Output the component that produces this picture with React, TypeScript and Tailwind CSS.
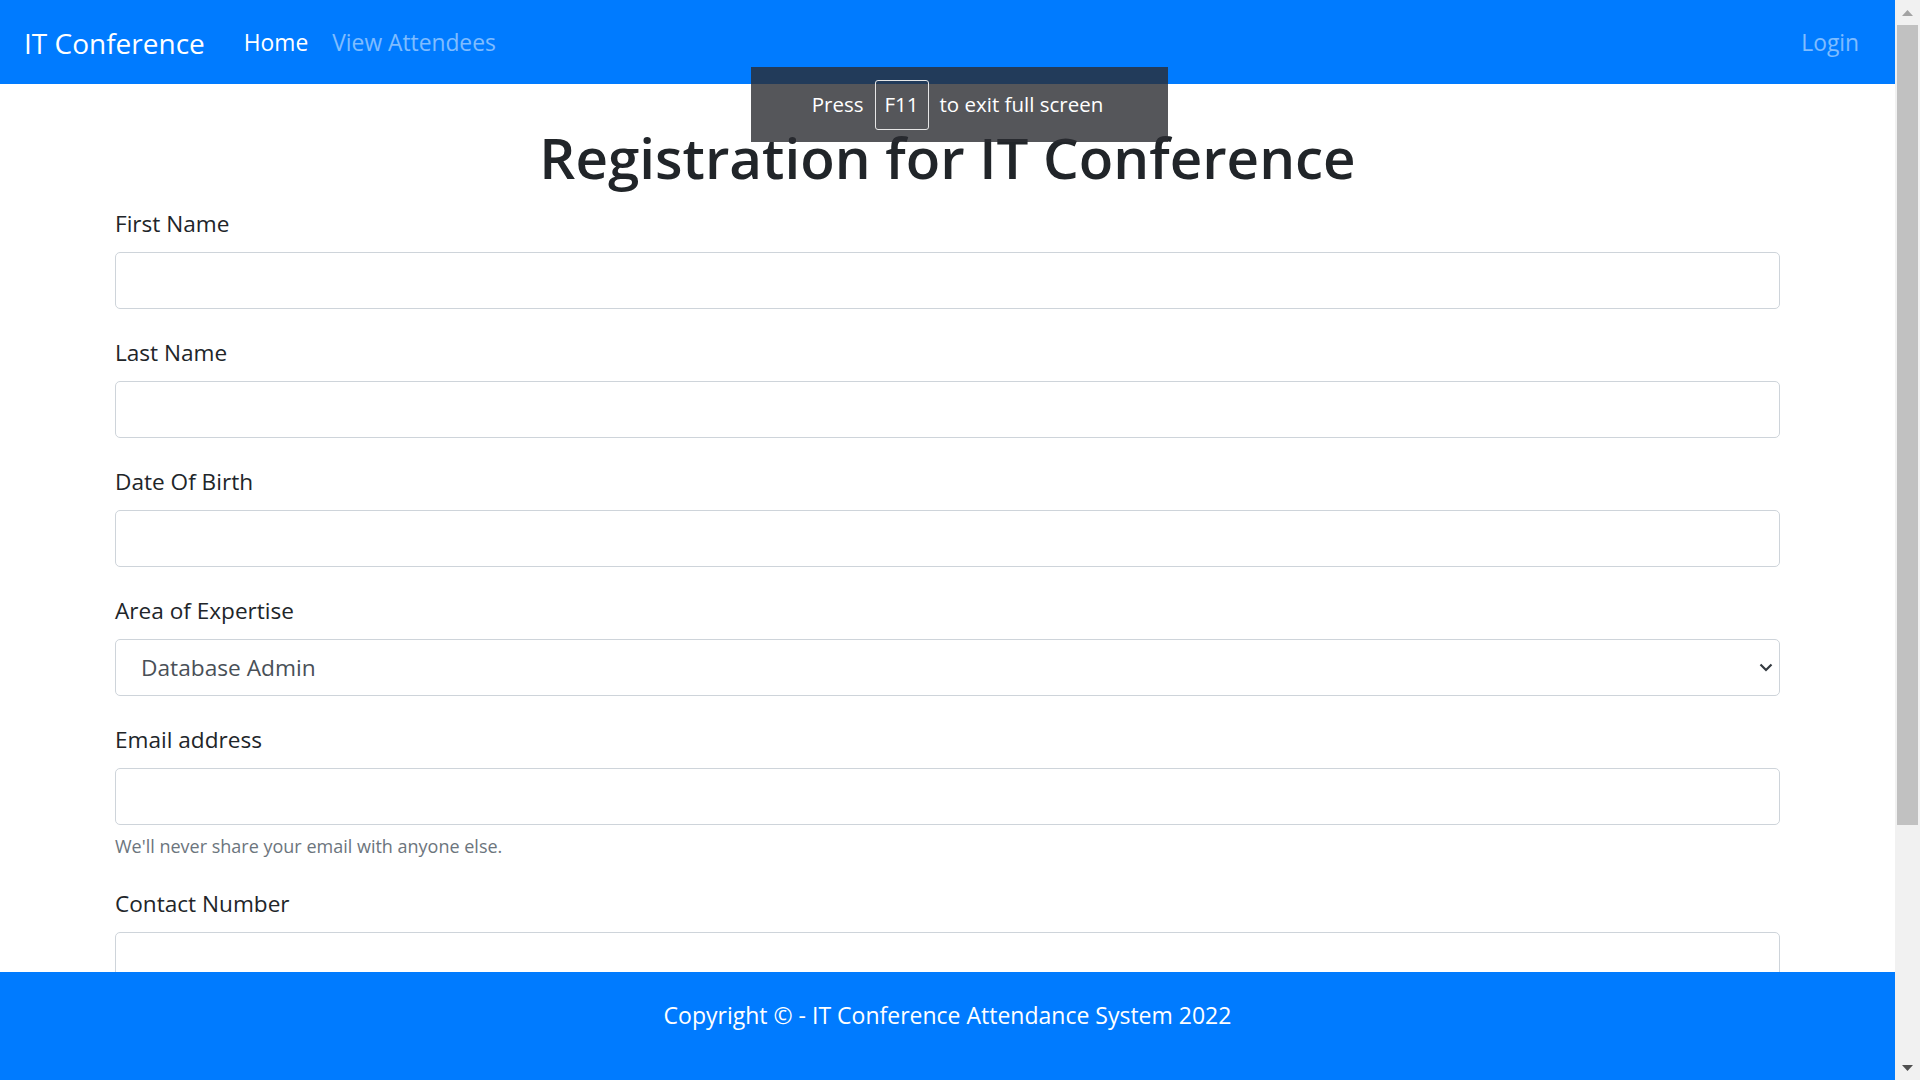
import React from "react";

const fields = [
  { label: "First Name", type: "text" },
  { label: "Last Name", type: "text" },
  { label: "Date Of Birth", type: "text" },
];

const Scrollbar = () => (
  <div className="flex h-full w-[25px] shrink-0 flex-col bg-[#f1f1f1]">
    <div className="flex h-[25px] items-center justify-center">
      <svg width="11" height="6" viewBox="0 0 11 6">
        <polygon points="0,6 11,6 5.5,0" fill="#a3a3a3" />
      </svg>
    </div>
    <div className="flex-1 px-[2px]">
      <div className="h-[800px] w-full bg-[#c1c1c1]" />
    </div>
    <div className="flex h-[25px] items-center justify-center">
      <svg width="11" height="6" viewBox="0 0 11 6">
        <polygon points="0,0 11,0 5.5,6" fill="#505050" />
      </svg>
    </div>
  </div>
);

const App = () => {
  return (
    <div className="flex h-screen w-full overflow-hidden bg-white font-['Open_Sans','Noto_Sans',sans-serif] text-[#212529]">
      <div className="relative flex min-w-0 flex-1 flex-col">
        {/* Navbar */}
        <nav className="flex h-[84px] shrink-0 items-center bg-[#007bff] pl-[24px] pr-[24px] pt-[2px]">
          <a className="mr-[27px] text-[28px] leading-[40px] text-white">IT Conference</a>
          <a className="px-[12px] text-[22.8px] leading-[32px] text-white">Home</a>
          <a className="px-[12px] text-[22.8px] leading-[32px] text-white/50">View Attendees</a>
          <a className="ml-auto px-[12px] text-[22.8px] leading-[32px] text-white/50">Login</a>
        </nav>

        {/* Form */}
        <main className="min-h-0 flex-1 overflow-hidden px-[115px] pt-[37px]">
          <h1 className="mb-[14px] text-center text-[56.5px] font-semibold leading-[74px]">
            Registration for IT Conference
          </h1>

          {fields.map((f) => (
            <div key={f.label} className="mb-[29px]">
              <label className="mb-[13px] block text-[22.6px] leading-[30px]">{f.label}</label>
              <input
                type={f.type}
                className="block h-[57px] w-full rounded-[5px] border border-[#ced4da] bg-white px-[20px] text-[23px] outline-none"
              />
            </div>
          ))}

          <div className="mb-[29px]">
            <label className="mb-[13px] block text-[22.6px] leading-[30px]">Area of Expertise</label>
            <div className="flex h-[57px] w-full items-center justify-between rounded-[5px] border border-[#ced4da] bg-white pl-[25px] pr-[6px]">
              <span className="text-[22.7px] leading-[30px] text-[#495057]">Database Admin</span>
              <svg width="14" height="9" viewBox="0 0 14 9" fill="none">
                <polyline points="1.5,1.5 7,7 12.5,1.5" stroke="#343a40" strokeWidth="2.2" />
              </svg>
            </div>
          </div>

          <div className="mb-[31px]">
            <label className="mb-[13px] block text-[22.6px] leading-[30px]">Email address</label>
            <input
              type="email"
              className="block h-[57px] w-full rounded-[5px] border border-[#ced4da] bg-white px-[20px] text-[23px] outline-none"
            />
            <small className="mt-[9px] block text-[18px] leading-[24px] text-[#6c757d]">
              We'll never share your email with anyone else.
            </small>
          </div>

          <div className="mb-[30px]">
            <label className="mb-[13px] block text-[22.6px] leading-[30px]">Contact Number</label>
            <input
              type="text"
              className="block h-[57px] w-full rounded-[5px] border border-[#ced4da] bg-white px-[20px] text-[23px] outline-none"
            />
          </div>
        </main>

        {/* Footer */}
        <footer className="h-[108px] shrink-0 bg-[#007bff] pt-[28px] text-center text-[23px] leading-[30px] text-white">
          Copyright © - IT Conference Attendance System 2022
        </footer>

        {/* Browser fullscreen bubble */}
        <div className="absolute left-[751px] top-[67px] flex h-[75px] w-[417px] items-center justify-center bg-[rgba(42,44,49,0.8)] pr-[4px] text-[20.5px] text-white">
          <span>Press</span>
          <span className="mx-[11px] flex h-[50px] w-[54px] items-center justify-center rounded-[3px] border border-[#e6e6e6]">
            F11
          </span>
          <span>to exit full screen</span>
        </div>
      </div>
      <Scrollbar />
    </div>
  );
};

export default App;
